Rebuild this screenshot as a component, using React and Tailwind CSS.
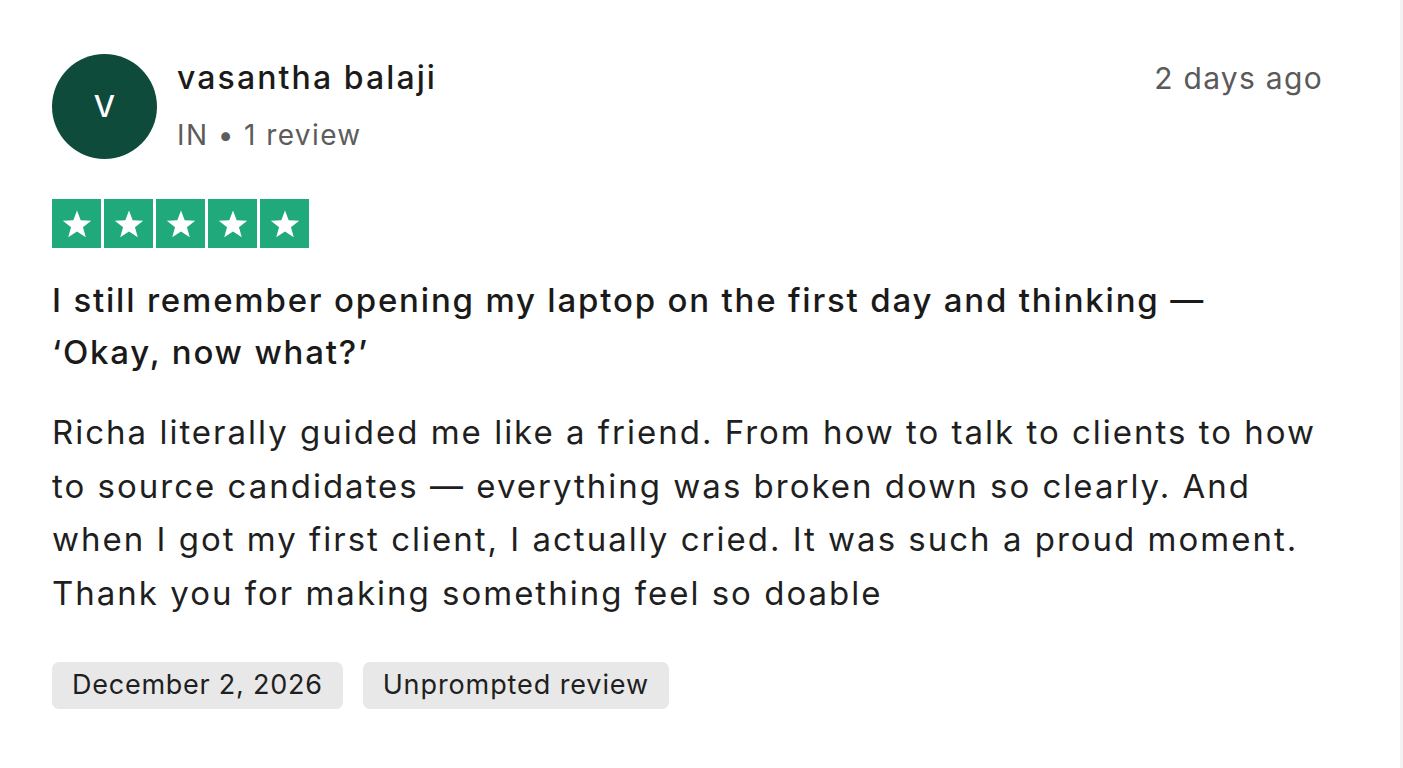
import React from "react";

function Star() {
  return (
    <svg viewBox="0 0 24 24" className="h-[34px] w-[34px]">
      <path
        d="M12 2.5l2.6 6.9 7.4.3-5.8 4.6 2 7.1L12 17.3l-6.2 4.1 2-7.1L2 9.7l7.4-.3z"
        fill="#ffffff"
      />
    </svg>
  );
}

export default function App() {
  return (
    <div
      className="min-h-screen w-full border-r-[3px] border-[#f3f3f3] bg-white text-[#1a1a1a]"
      style={{ fontFamily: 'Inter, "Liberation Sans", sans-serif' }}
    >
      <div className="pl-[52px] pr-[77px] pt-[54px]">
        {/* Header */}
        <div className="flex items-start">
          <div className="flex h-[105px] w-[105px] shrink-0 items-center justify-center rounded-full bg-[#0e4b3a]">
            <span className="text-[30px] font-medium text-white">V</span>
          </div>
          <div className="ml-[20px] flex-1 pt-[4px]">
            <div className="text-[32px] leading-[40px] font-medium tracking-[2.1px] text-[#1b1b1b]">
              vasantha balaji
            </div>
            <div className="mt-[20px] text-[28px] leading-[34px] tracking-[1.4px] text-[#5c5c5c]">
              IN • 1 review
            </div>
          </div>
          <div className="pt-[4px] text-[30px] leading-[40px] tracking-[1.3px] text-[#5a5a5a]">
            2 days ago
          </div>
        </div>

        {/* Stars */}
        <div className="mt-[40px] flex gap-[3px]">
          {[0, 1, 2, 3, 4].map((i) => (
            <div
              key={i}
              className="flex h-[49px] w-[49px] items-center justify-center bg-[#20a97a]"
            >
              <Star />
            </div>
          ))}
        </div>

        {/* Title */}
        <div className="mt-[26px] text-[33px] leading-[52px] font-medium tracking-[1.8px] text-[#1a1a1a]">
          I still remember opening my laptop on the first day and thinking —
          <br />
          ‘Okay, now what?’
        </div>

        {/* Body */}
        <div className="mt-[28px] text-[33px] leading-[53.7px] tracking-[2px] text-[#1f1f1f]">
          Richa literally guided me like a friend. From how to talk to clients to how
          <br />
          to source candidates — everything was broken down so clearly. And
          <br />
          when I got my first client, I actually cried. It was such a proud moment.
          <br />
          Thank you for making something feel so doable
        </div>

        {/* Tags */}
        <div className="mt-[41px] flex gap-[20px]">
          <div className="flex h-[47px] items-center rounded-[7px] bg-[#e8e8e8] px-[20px] text-[27px] tracking-[0.75px] text-[#1f1f1f]">
            December 2, 2026
          </div>
          <div className="flex h-[47px] items-center rounded-[7px] bg-[#e8e8e8] px-[20px] text-[27px] tracking-[0.9px] text-[#1f1f1f]">
            Unprompted review
          </div>
        </div>
      </div>
    </div>
  );
}
